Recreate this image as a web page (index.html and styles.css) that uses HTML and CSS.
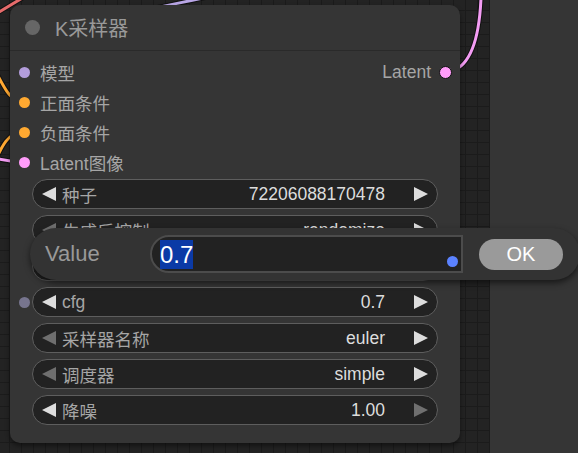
FILE: index.html
```html
<!DOCTYPE html>
<html lang="zh">

<head>
    <meta charset="UTF-8">
    <meta name="viewport" content="width=device-width, initial-scale=1.0">
    <title>K采样器</title>
    <link rel="stylesheet" href="styles.css">
</head>

<body>
    <div class="screen">
        <div class="graph">
            <svg class="links" width="490" height="453" viewBox="0 0 490 453">
                <g class="link-outline">
                    <path d="M-6 15 L24 -3" />
                    <path d="M150 9 C172 4 192 1 216 -5" />
                    <path d="M-12 58 C4 84 6 100 24 102" />
                    <path d="M-12 176 C2 146 6 133 24 132" />
                    <path d="M-12 156 C0 160 10 162 24 162" />
                    <path d="M452 71 C468 66 479 45 481 -2" />
                </g>
                <path class="link red" d="M-6 15 L24 -3" />
                <path class="link violet" d="M150 9 C172 4 192 1 216 -5" />
                <path class="link orange" d="M-12 58 C4 84 6 100 24 102" />
                <path class="link orange" d="M-12 176 C2 146 6 133 24 132" />
                <path class="link pink" d="M-12 156 C0 160 10 162 24 162" />
                <path class="link pink" d="M452 71 C468 66 479 45 481 -2" />
            </svg>

            <div class="node">
                <div class="node_title"><span class="title_dot"></span>K采样器</div>
                <div class="node_body">
                    <div class="slots">
                        <div class="slot_row">
                            <div class="slot"><span class="pin pin_model"></span>模型</div>
                            <div class="slot slot_out">Latent<span class="pin pin_latent pin_out"></span></div>
                        </div>
                        <div class="slot_row">
                            <div class="slot"><span class="pin pin_cond"></span>正面条件</div>
                        </div>
                        <div class="slot_row">
                            <div class="slot"><span class="pin pin_cond"></span>负面条件</div>
                        </div>
                        <div class="slot_row">
                            <div class="slot"><span class="pin pin_latent"></span>Latent图像</div>
                        </div>
                    </div>

                    <div class="widgets">
                        <div class="wrow">
                            <span class="pin pin_none"></span>
                            <div class="widget">
                                <span class="arrow_l"></span>
                                <span class="w_label">种子</span>
                                <span class="w_value">72206088170478</span>
                                <span class="arrow_r"></span>
                            </div>
                        </div>
                        <div class="wrow">
                            <span class="pin pin_none"></span>
                            <div class="widget">
                                <span class="arrow_l off"></span>
                                <span class="w_label">生成后控制</span>
                                <span class="w_value">randomize</span>
                                <span class="arrow_r"></span>
                            </div>
                        </div>
                        <!-- steps row sits under the prompt -->
                        <div class="wrow">
                            <span class="pin pin_none"></span>
                            <div class="widget">
                                <span class="arrow_l"></span>
                                <span class="w_label"></span>
                                <span class="arrow_r"></span>
                            </div>
                        </div>
                        <div class="wrow">
                            <span class="pin pin_widget"></span>
                            <div class="widget">
                                <span class="arrow_l"></span>
                                <span class="w_label">cfg</span>
                                <span class="w_value">0.7</span>
                                <span class="arrow_r"></span>
                            </div>
                        </div>
                        <div class="wrow">
                            <span class="pin pin_none"></span>
                            <div class="widget">
                                <span class="arrow_l off"></span>
                                <span class="w_label">采样器名称</span>
                                <span class="w_value">euler</span>
                                <span class="arrow_r"></span>
                            </div>
                        </div>
                        <div class="wrow">
                            <span class="pin pin_none"></span>
                            <div class="widget">
                                <span class="arrow_l off"></span>
                                <span class="w_label">调度器</span>
                                <span class="w_value">simple</span>
                                <span class="arrow_r"></span>
                            </div>
                        </div>
                        <div class="wrow">
                            <span class="pin pin_none"></span>
                            <div class="widget">
                                <span class="arrow_l"></span>
                                <span class="w_label">降噪</span>
                                <span class="w_value">1.00</span>
                                <span class="arrow_r off"></span>
                            </div>
                        </div>
                    </div>
                </div>
            </div>
        </div>

        <div class="side"></div>

        <!-- value prompt opened from the cfg widget -->
        <div class="prompt">
            <span class="prompt_name">Value</span>
            <div class="prompt_input">
                <span class="selected">0.7</span>
                <span class="input_dot"></span>
            </div>
            <button class="prompt_ok">OK</button>
        </div>
    </div>
</body>

</html>
```

FILE: styles.css
```css
* {
    box-sizing: border-box;
    font-family: 'Liberation Sans', Arial, 'Noto Sans CJK SC', sans-serif;
}

body {
    margin: 0;
    background: #222;
    overflow: hidden;
}

.screen {
    position: relative;
    display: flex;
    width: 578px;
    height: 453px;
}

.graph {
    position: relative;
    width: 490px;
    height: 100%;
    background-color: #232323;
    background-image:
        linear-gradient(to right, #1b1b1b 1px, transparent 1px),
        linear-gradient(to bottom, #1b1b1b 1px, transparent 1px);
    background-size: 12px 12px;
    background-position: 9px 10px;
}

.side {
    flex: 1;
    background: #353535;
}

/* links between nodes */
.links {
    position: absolute;
    left: 0;
    top: 0;
}

.link-outline path {
    fill: none;
    stroke: #111;
    stroke-width: 5;
}

.link {
    fill: none;
    stroke-width: 3;
}

.red {
    stroke: #e56b6b;
}

.violet {
    stroke: #b9a6e6;
}

.orange {
    stroke: #ffa832;
}

.pink {
    stroke: #f49cf4;
}

/* node */
.node {
    position: absolute;
    left: 10px;
    top: 5px;
    width: 450px;
    height: 438px;
    background: #353535;
    border-radius: 10px;
    box-shadow: 0 3px 5px rgba(0, 0, 0, 0.45);
    display: flex;
    flex-flow: column;
}

.node_title {
    height: 46px;
    display: flex;
    align-items: center;
    gap: 15px;
    padding-left: 15px;
    color: #999;
    font-size: 20px;
    border-bottom: 1px solid #2a2a2a;
}

.title_dot {
    width: 15px;
    height: 15px;
    border-radius: 50%;
    background: #666;
}

.node_body {
    padding: 6px 0 18px;
}

.slot_row {
    display: flex;
    justify-content: space-between;
    align-items: center;
    height: 30px;
}

.slot {
    display: flex;
    align-items: center;
    gap: 10px;
    padding-left: 9px;
    color: #a6a6a6;
    font-size: 17.5px;
}

.slot_out {
    padding-left: 0;
    padding-right: 8px;
    gap: 8px;
}

.pin {
    width: 11px;
    height: 11px;
    border-radius: 50%;
    flex-shrink: 0;
}

.pin_model {
    background: #b39ddb;
}

.pin_cond {
    background: #ffa931;
}

.pin_latent {
    background: #ff9cf9;
}

.pin_out {
    width: 13px;
    height: 13px;
    border: 1.5px solid #111;
}

.pin_widget {
    background: #77758e;
}

.pin_none {
    visibility: hidden;
}

/* widgets */
.widgets {
    margin-top: 2px;
    display: flex;
    flex-flow: column;
    gap: 6px;
}

.wrow {
    display: flex;
    align-items: center;
    gap: 2px;
    padding: 0 22px 0 9px;
}

.widget {
    flex: 1;
    height: 30px;
    display: flex;
    align-items: center;
    padding: 0 9px;
    background: #222;
    border: 1px solid #5e5e5e;
    border-radius: 15px;
    font-size: 17.5px;
}

.arrow_l {
    width: 0;
    height: 0;
    border-top: 7.5px solid transparent;
    border-bottom: 7.5px solid transparent;
    border-right: 14px solid #ddd;
    margin-right: 6px;
}

.arrow_r {
    width: 0;
    height: 0;
    border-top: 7.5px solid transparent;
    border-bottom: 7.5px solid transparent;
    border-left: 14px solid #ddd;
}

.arrow_l.off {
    border-right-color: #6f6f6f;
}

.arrow_r.off {
    border-left-color: #6f6f6f;
}

.w_label {
    flex: 1;
    color: #a6a6a6;
}

.w_value {
    color: #ddd;
    margin-right: 29px;
}

/* prompt dialog */
.prompt {
    position: absolute;
    left: 30px;
    top: 228px;
    width: 550px;
    height: 52px;
    display: flex;
    align-items: center;
    padding: 0 15px;
    background: #333;
    border-radius: 26px;
    box-shadow: 0 3px 6px rgba(0, 0, 0, 0.55);
}

.prompt_name {
    width: 105px;
    color: #999;
    font-size: 22px;
}

.prompt_input {
    position: relative;
    width: 313px;
    height: 38px;
    display: flex;
    align-items: center;
    padding-left: 8px;
    background: #222;
    border: 2px solid #4c4c4c;
    border-radius: 19px 0 0 19px;
}

.selected {
    background: #0b3aa6;
    color: #fff;
    font-size: 24px;
    line-height: 29px;
}

.input_dot {
    position: absolute;
    right: 3px;
    bottom: 4px;
    width: 11px;
    height: 11px;
    border-radius: 50%;
    background: #5b82ff;
}

.prompt_ok {
    margin-left: 16px;
    width: 84px;
    height: 31px;
    border: none;
    border-radius: 16px;
    background: #9a9a9a;
    color: #fff;
    font-size: 20px;
    padding: 0;
}
```
